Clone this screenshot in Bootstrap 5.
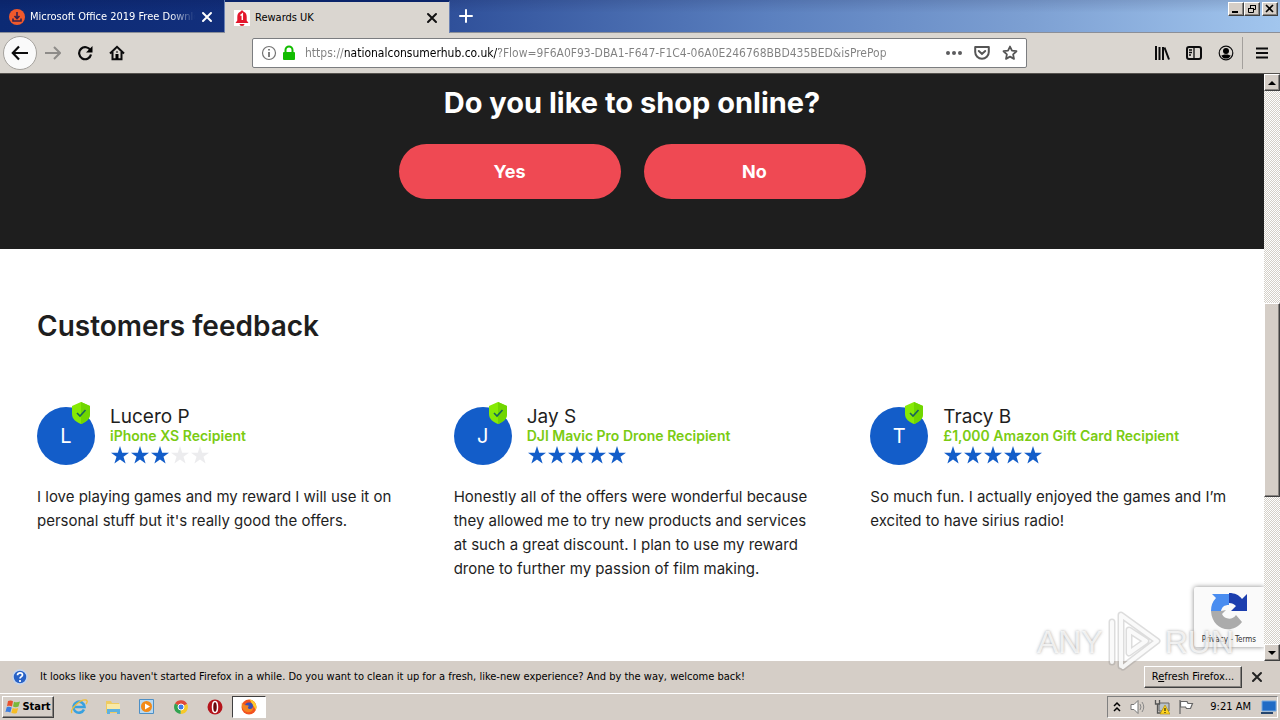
<!DOCTYPE html>
<html lang="en">
<head>
<meta charset="utf-8">
<meta name="viewport" content="width=device-width, initial-scale=1">
<title>Rewards UK</title>
<link href="https://cdn.jsdelivr.net/npm/bootstrap@5.3.0/dist/css/bootstrap.min.css" rel="stylesheet">
<style>
:root { --chrome: #dad6d0; --classic: #d5cec7; --brand: #135dc9; --ui: "DejaVu Sans Condensed", "DejaVu Sans", sans-serif; }
body { font-family: var(--ui); font-size: 11px; line-height: 16px; color: #000; background: var(--classic); }
button { padding: 0; border: 0; background: none; color: inherit; }
svg { display: block; flex: none; }
.tabstrip { height: 33px; background: linear-gradient(rgba(0,0,40,.12), transparent 40%), linear-gradient(90deg, #0c2a74 0, #122f7c 18%, #2f509a 35%, #5b80bf 60%, #7c9fd2 80%, #a2c6ee 100%); border-bottom: 1px solid #8b8f98; }
.browser-tab { width: 225px; color: #fff; padding: 2px 9px 0 8px; border-right: 1px solid #6b82b4; }
.browser-tab.current { background: var(--chrome); color: #000; border-top: 2px solid #0a246a; margin-bottom: -1px; padding-top: 0; }
.tab-title { -webkit-mask-image: linear-gradient(90deg, #000 85%, transparent); mask-image: linear-gradient(90deg, #000 85%, transparent); }
.bevel { background: var(--classic); border: 1px solid; border-color: #fff #404040 #404040 #fff; box-shadow: inset -1px -1px #888480; }
.win-controls { padding: 2px 2px 0 0; }
.win-btn { width: 16px; height: 14px; }
.win-btn + .win-btn + .win-btn { margin-left: 2px; }
.toolbar-row { height: 41px; background: var(--chrome); border-bottom: 1px solid #55524e; padding: 0 3px; }
.back { width: 34px; height: 34px; border-radius: 50%; background: #fafafa; border: 1px solid #a5a29d; }
.address { width: 775px; height: 30px; border: 1px solid #7b7d80; border-radius: 2px; background: #fff; }
.address input { border: 0; outline: 0; padding: 0; font-size: 12px; color: transparent; background: linear-gradient(90deg, #808080 0 40px, #000 40px 194px, #808080 194px calc(100% - 60px), transparent calc(100% - 20px)); -webkit-background-clip: text; background-clip: text; min-width: 0; }
.toolbar-row .vr { height: 32px; align-self: center; }
.page { font-family: Inter, "Open Sans", sans-serif; color: #1e1e1e; background: #fff; }
.question { background: #1e1e1e; color: #fff; padding: 12px 16px 50px; }
.question h1 { font-size: 29px; line-height: 34px; font-weight: 700; margin-bottom: 24px; }
.answers { gap: 23px; }
.answer { width: 222px; height: 55px; border-radius: 28px; background: #ef4953; font-size: 18px; font-weight: 700; color: #fff; }
.feedback { padding: 60px 37px; }
.feedback h2 { font-size: 28px; line-height: 34px; font-weight: 600; margin-bottom: 64px; }
.reviews { display: grid; grid-template-columns: repeat(3, minmax(0, 1fr)); column-gap: 60px; }
.reviewer { gap: 15px; }
.avatar { width: 58px; height: 58px; border-radius: 50%; background: var(--brand); color: #fff; font-size: 20px; }
.shield { position: absolute; top: -5px; right: 4px; }
.who h3 { font-size: 19px; line-height: 20px; font-weight: 400; margin: 0; }
.who p { font-size: 14px; line-height: 18px; font-weight: 600; color: #7acb12; margin: 0; }
.review-text { font-size: 15px; line-height: 24px; margin: 20px 0 0; white-space: nowrap; }
.track { width: 16px; background: repeating-conic-gradient(#d4d0c8 0 25%, #fff 0 50%) 0 0 / 2px 2px; }
.track .bevel { width: 16px; }
.track .arrow { height: 17px; }
.captcha { position: absolute; right: 0; bottom: 14px; width: 70px; height: 60px; background: #fafafa; box-shadow: 0 0 5px #888; font-size: 8px; line-height: 10px; border-radius: 2px 0 0 2px; font-family: "DejaVu Sans Condensed", sans-serif; padding: 4px 0 2px; }
.captcha a { color: #333; text-decoration: none; }
.brandmark { position: absolute; right: 46px; bottom: 46px; z-index: 3; pointer-events: none; font-family: "Liberation Sans Narrow", "Liberation Sans", sans-serif; font-size: 32px; line-height: 64px; color: rgba(255,255,255,.75); text-shadow: 0 0 3px rgba(90,90,90,.55); }
.notice { height: 33px; border-bottom: 1px solid #fff; background: var(--classic); }
.refresh { width: 98px; height: 22px; }
.taskbar { height: 26px; background: var(--classic); padding: 0 2px; }
.start { width: 52px; height: 22px; font-weight: 700; }
.launch { width: 34px; height: 22px; }
.launch.open { background: #fff; border: 1px solid; border-color: #404040 #fff #fff #404040; }
.tray { height: 22px; border: 1px solid; border-color: #808080 #fff #fff #808080; }
</style>
</head>
<body class="vh-100 d-flex flex-column overflow-hidden">
<header>
  <div class="tabstrip d-flex">
    <div class="browser-tab d-flex align-items-center gap-1">
      <svg width="18" height="18" viewBox="0 0 18 18"><circle cx="9" cy="9" r="8" fill="#f0592b"/><path d="M9 4v6M6.500 8L9 10.500 11.500 8M5 10.500v2.500h8v-2.500" fill="none" stroke="#38204a" stroke-width="1.600"/></svg>
      <span class="tab-title flex-grow-1 text-nowrap overflow-hidden">Microsoft Office 2019 Free Download</span>
      <button aria-label="Close tab"><svg width="16" height="16" viewBox="0 0 16 16"><path d="M4 4l8 8M12 4l-8 8" stroke="#fff" stroke-width="2" stroke-linecap="round"/></svg></button>
    </div>
    <div class="browser-tab current d-flex align-items-center gap-1">
      <svg width="18" height="18" viewBox="0 0 18 18"><path fill="#fff" d="M1 1h16v16H1z"/><path d="M9 1.500c-1 0-1.500.6-1.500 1.300C5 3.500 4.300 5.500 4.300 8v3.500L2.500 14h13l-1.800-2.500V8c0-2.500-.7-4.500-3.200-5.200 0-.7-.5-1.300-1.500-1.300zM6.500 15a2.500 2 0 0 0 5 0z" fill="#e3172c"/><path d="M7.500 6.500L9.300 5v6" fill="none" stroke="#fff" stroke-width="1.500"/></svg>
      <span class="flex-grow-1">Rewards UK</span>
      <button aria-label="Close tab"><svg width="16" height="16" viewBox="0 0 16 16"><path d="M4 4l8 8M12 4l-8 8" stroke="#111" stroke-width="2" stroke-linecap="round"/></svg></button>
    </div>
    <button class="px-2" aria-label="New tab"><svg width="16" height="16" viewBox="0 0 16 16"><path d="M8 2v12M2 8h12" stroke="#fff" stroke-width="2" stroke-linecap="round"/></svg></button>
    <div class="win-controls d-flex ms-auto align-self-start">
      <button class="bevel win-btn" aria-label="Minimise"><svg width="14" height="12"><path d="M3 8h6v2H3z"/></svg></button>
      <button class="bevel win-btn" aria-label="Restore"><svg width="14" height="12"><path d="M5.500 5V2.500h5v4H9M5 2.500h6M3.500 5.500h5v4h-5zM3 5.500h6" fill="none" stroke="#000"/></svg></button>
      <button class="bevel win-btn" aria-label="Close"><svg width="14" height="12"><path d="M3 2l7 7M10 2L3 9" stroke="#000" stroke-width="1.600"/></svg></button>
    </div>
  </div>
  <nav class="toolbar-row d-flex align-items-center" aria-label="Browser">
    <div class="d-flex align-items-center gap-2 flex-grow-1">
      <button class="back d-flex align-items-center justify-content-center" aria-label="Back"><svg width="18" height="18" viewBox="0 0 18 18"><path d="M17 9H2M8 2.500L1.800 9 8 15.500" fill="none" stroke="#0c0c0d" stroke-width="2.200"/></svg></button>
      <div class="d-flex align-items-center gap-3">
        <button aria-label="Forward"><svg width="16" height="16" viewBox="0 0 16 16"><path d="M0 8h15M9 2l6 6-6 6" fill="none" stroke="#8e8c89" stroke-width="2"/></svg></button>
        <button aria-label="Reload"><svg width="16" height="16" viewBox="0 0 16 16"><path d="M13.500 5.500A6 6 0 1 0 14 9.500" fill="none" stroke="#0c0c0d" stroke-width="2.200"/><path d="M15.500 1v6.500H9z"/></svg></button>
        <button aria-label="Home"><svg width="16" height="16" viewBox="0 0 16 16"><path d="M1 8.500L8 1.800l7 6.700M3.500 7v7.200h9V7" fill="none" stroke="#0c0c0d" stroke-width="2"/><path d="M6.500 9h3v5h-3z"/><path d="M7.500 6h1v2h-1z"/></svg></button>
      </div>
    </div>
    <div class="address d-flex align-items-center px-2 gap-1">
      <svg width="16" height="16" viewBox="0 0 16 16"><circle cx="8" cy="8" r="6.500" fill="none" stroke="#737373" stroke-width="1.200"/><path d="M7.200 4h1.600v1.600H7.200zM7.200 7h1.600v5H7.200z" fill="#606060"/></svg>
      <svg width="16" height="16" viewBox="0 0 16 16"><path d="M4.500 8V5a3.500 3.500 0 0 1 7 0v3" fill="none" stroke="#12bc00" stroke-width="2"/><rect x="2" y="7" width="12" height="8" rx="1" fill="#12bc00"/></svg>
      <input class="flex-grow-1 ms-1" type="text" aria-label="Address" value="https://nationalconsumerhub.co.uk/?Flow=9F6A0F93-DBA1-F647-F1C4-06A0E246768BBD435BED&amp;isPrePop">
      <div class="d-flex gap-2 align-items-center">
        <button class="pe-1" aria-label="Page actions"><svg width="16" height="16"><g fill="#5c5c5e"><circle cx="2" cy="8" r="2"/><circle cx="8" cy="8" r="2"/><circle cx="14" cy="8" r="2"/></g></svg></button>
        <button class="pe-1" aria-label="Save to Pocket"><svg width="16" height="16" viewBox="0 0 16 16"><path d="M1.200 2h13.600v5A6.800 6.800 0 0 1 1.200 7z" fill="none" stroke="#555" stroke-width="2" stroke-linejoin="round"/><path d="M4.800 6L8 9l3.200-3" fill="none" stroke="#555" stroke-width="2" stroke-linecap="round"/></svg></button>
        <button aria-label="Bookmark"><svg width="16" height="16" viewBox="0 0 18 18"><path d="M9 1.700l2.200 4.700 5.100.6-3.800 3.500 1 5.100L9 13.100l-4.500 2.500 1-5.100L1.700 7l5.100-.6z" fill="none" stroke="#555" stroke-width="2" stroke-linejoin="round"/></svg></button>
      </div>
    </div>
    <div class="d-flex align-items-center gap-2 flex-grow-1 justify-content-end pe-2">
      <div class="d-flex gap-3">
        <button aria-label="Library"><svg width="16" height="16" viewBox="0 0 16 16"><path d="M2 1v14M5.500 2v13M9 2v13M10.500 2.500l4.500 12" stroke="#0c0c0d" stroke-width="2"/></svg></button>
        <button aria-label="Sidebars"><svg width="16" height="16" viewBox="0 0 16 16"><rect x="1" y="2" width="14" height="12" rx="2" fill="none" stroke="#0c0c0d" stroke-width="2"/><path d="M8 2v12M3 5h3M3 7.500h3M3 10h2" stroke="#0c0c0d" stroke-width="1.300"/></svg></button>
        <button aria-label="Account"><svg width="16" height="16" viewBox="0 0 16 16"><circle cx="8" cy="8" r="6.800" fill="none" stroke="#0c0c0d" stroke-width="1.200"/><circle cx="8" cy="6" r="3"/><path d="M3.300 10.500c1.500 0 2-1 3-1h3.400c1 0 1.500 1 3 1C11.500 13 10 13.500 8 13.500s-3.500-.5-4.700-3z"/></svg></button>
      </div>
      <div class="vr"></div>
      <button class="ps-1" aria-label="Menu"><svg width="14" height="14" viewBox="0 0 14 14"><path d="M1 2.500h12M1 7h12M1 11.500h12" stroke="#0c0c0d" stroke-width="2"/></svg></button>
    </div>
  </nav>
</header>

<div class="d-flex flex-grow-1 overflow-hidden">
  <main class="page flex-grow-1 position-relative overflow-hidden">
    <section class="question text-center">
      <h1>Do you like to shop online?</h1>
      <div class="answers d-flex justify-content-center">
        <button class="answer">Yes</button>
        <button class="answer">No</button>
      </div>
    </section>
    <section class="feedback">
      <h2>Customers feedback</h2>
      <div class="reviews">
        <article>
          <div class="reviewer d-flex align-items-center">
            <div class="avatar position-relative d-flex align-items-center justify-content-center">L<svg class="shield" width="20" height="22" viewBox="0 0 20 22"><use href="#shield"/></svg></div>
            <div class="who"><h3>Lucero P</h3><p>iPhone XS Recipient</p><svg width="100" height="20" role="img" aria-label="3 of 5 stars"><g fill="#135dc9"><use href="#star"/><use href="#star" x="20"/><use href="#star" x="40"/></g><g fill="#ececee"><use href="#star" x="60"/><use href="#star" x="80"/></g></svg></div>
          </div>
          <p class="review-text">I love playing games and my reward I will use it on<br>personal stuff but it's really good the offers.</p>
        </article>
        <article>
          <div class="reviewer d-flex align-items-center">
            <div class="avatar position-relative d-flex align-items-center justify-content-center">J<svg class="shield" width="20" height="22" viewBox="0 0 20 22"><use href="#shield"/></svg></div>
            <div class="who"><h3>Jay S</h3><p>DJI Mavic Pro Drone Recipient</p><svg width="100" height="20" role="img" aria-label="5 of 5 stars" fill="#135dc9"><use href="#star"/><use href="#star" x="20"/><use href="#star" x="40"/><use href="#star" x="60"/><use href="#star" x="80"/></svg></div>
          </div>
          <p class="review-text">Honestly all of the offers were wonderful because<br>they allowed me to try new products and services<br>at such a great discount. I plan to use my reward<br>drone to further my passion of film making.</p>
        </article>
        <article>
          <div class="reviewer d-flex align-items-center">
            <div class="avatar position-relative d-flex align-items-center justify-content-center">T<svg class="shield" width="20" height="22" viewBox="0 0 20 22"><use href="#shield"/></svg></div>
            <div class="who"><h3>Tracy B</h3><p>£1,000 Amazon Gift Card Recipient</p><svg width="100" height="20" role="img" aria-label="5 of 5 stars" fill="#135dc9"><use href="#star"/><use href="#star" x="20"/><use href="#star" x="40"/><use href="#star" x="60"/><use href="#star" x="80"/></svg></div>
          </div>
          <p class="review-text">So much fun. I actually enjoyed the games and I’m<br>excited to have sirius radio!</p>
        </article>
      </div>
    </section>
    <aside class="captcha d-flex flex-column align-items-center justify-content-between">
      <svg width="40" height="40" viewBox="0 0 40 40"><path d="M2 20A18 18 0 0 1 7 7L3 3h17v11c-5 0-7 2-8 6z" fill="#4a8df0"/><path d="M20 2c6 0 10 2 13 6l5-5v17H22l5-5c-2-2-4-3-7-3z" fill="#1c3eae"/><path d="M2 20h10l5-1-4 4c2 5 10 7 14 1l6 7C23 44 3 39 2 20z" fill="#ababab"/></svg>
      <div><a href="#privacy">Privacy</a> - <a href="#terms">Terms</a></div>
    </aside>
  </main>
  <div class="track d-flex flex-column">
    <button class="bevel arrow d-flex align-items-center justify-content-center" aria-label="Scroll up"><svg width="8" height="4"><path d="M0 4l4-4 4 4z"/></svg></button>
    <div style="flex:214"></div><div class="bevel" style="flex:194"></div><div style="flex:148"></div>
    <button class="bevel arrow d-flex align-items-center justify-content-center" aria-label="Scroll down"><svg width="8" height="4"><path d="M0 0h8L4 4z"/></svg></button>
  </div>
</div>

<div class="brandmark d-flex align-items-center" aria-hidden="true">
  <span>ANY</span>
  <svg width="62" height="64" viewBox="0 0 62 64"><g fill="none" stroke-linejoin="round" stroke-linecap="round"><path d="M9 52V12M18 56V5l36 26-34 26M26 43V20l17 11z" stroke="#777" stroke-opacity=".25" stroke-width="7"/><path d="M9 52V12M18 56V5l36 26-34 26M26 43V20l17 11z" stroke="#fff" stroke-opacity=".85" stroke-width="4"/></g></svg>
  <span>RUN</span>
</div>

<div class="notice d-flex align-items-center ps-2 pe-3">
  <svg class="ms-1" width="16" height="16" viewBox="0 0 16 16"><circle cx="8" cy="8" r="7" fill="#2862c6" stroke="#c4d5ef" stroke-width="1.500"/><path d="M5.500 6.200C5.500 3 10.500 3.200 10.500 6 10.500 7.600 8 7.800 8 9.600M8 11v2" fill="none" stroke="#fff" stroke-width="1.700"/></svg>
  <span class="flex-grow-1 text-nowrap ps-2 ms-1">It looks like you haven't started Firefox in a while. Do you want to clean it up for a fresh, like-new experience? And by the way, welcome back!</span>
  <button class="refresh bevel me-2 text-nowrap">R<u>e</u>fresh Firefox...</button>
  <button aria-label="Dismiss"><svg width="14" height="14" viewBox="0 0 14 14"><path d="M3 3l8 8M11 3l-8 8" stroke="#222" stroke-width="2" stroke-linecap="round"/></svg></button>
</div>

<footer class="taskbar d-flex align-items-center">
  <button class="start bevel d-flex align-items-center justify-content-center me-2"><svg width="17" height="16" viewBox="0 0 17 16"><path d="M3 2c2-1 4-.5 5 .3L7 7.500C5.500 6.600 4 6.500 2 7.200z" fill="#e8502c"/><path d="M9 2.800c2 .8 4 .6 6-.2l-1.500 5c-2 .8-4 .7-5.500 0z" fill="#79b83a"/><path d="M1.700 8.300c2-.8 3.600-.5 5 .3l-1.400 5C4 12.700 2 12.600.4 13.200z" fill="#3b7de0"/><path d="M7.700 9c2 .8 3.600.7 5.500 0l-1.400 5c-2 .8-4 .6-5.500-.2z" fill="#f6bd25"/></svg>Start</button>
  <button class="launch d-flex align-items-center justify-content-center" aria-label="Internet Explorer"><svg width="18" height="18" viewBox="0 0 18 18"><path d="M14 11.500A5.500 5.500 0 1 1 14.500 9H5" fill="none" stroke="#38a1df" stroke-width="2.600"/><path d="M2 15C-1 12 10 1 16 2c2 .5 1 3 0 4" fill="none" stroke="#efbd37" stroke-width="1.300"/></svg></button>
  <button class="launch d-flex align-items-center justify-content-center" aria-label="Explorer"><svg width="18" height="18" viewBox="0 0 18 18"><path d="M2 3h5l1 2h7v10H2z" fill="#eecb62"/><path d="M3 6h13v5H3z" fill="#f8e9a6"/><path d="M3 11h13v5h-3v-2H6v2H3z" fill="#5fb1df"/></svg></button>
  <button class="launch d-flex align-items-center justify-content-center" aria-label="Media Player"><svg width="18" height="18" viewBox="0 0 18 18"><path d="M1.500 1.500h14v14h-14z" fill="#b8d9f2" stroke="#4d8fc5"/><circle cx="8.500" cy="8.500" r="5.500" fill="#f28a18"/><path d="M7 5.500v6l5-3z" fill="#fff"/></svg></button>
  <button class="launch d-flex align-items-center justify-content-center" aria-label="Chrome"><svg width="16" height="16" viewBox="0 0 16 16"><path d="M8 8L2 4.500A7 7 0 0 1 14.200 5z" fill="#e04a3a"/><path d="M8 8l6.200-3A7 7 0 0 1 7.500 15z" fill="#f7c928"/><path d="M8 8l-.5 7A7 7 0 0 1 2 4.500z" fill="#32a350"/><circle cx="8" cy="8" r="3" fill="#3e7ce8" stroke="#fff"/></svg></button>
  <button class="launch d-flex align-items-center justify-content-center" aria-label="Opera"><svg width="16" height="16" viewBox="0 0 16 16"><circle cx="8" cy="8" r="7.500" fill="#b5141b"/><ellipse cx="8" cy="8" rx="2.500" ry="5.500" fill="#6a080c" stroke="#fff" stroke-width="1.500"/></svg></button>
  <button class="launch open d-flex align-items-center justify-content-center" aria-label="Firefox"><svg width="18" height="18" viewBox="0 0 18 18"><circle cx="9" cy="9" r="7.500" fill="#f2521f"/><path d="M9 1.500a7.500 7.500 0 0 1 6.500 11C15 9 13 8 12 6 11 4 11 3 9 1.500z" fill="#ffcb2e"/><circle cx="9" cy="8.500" r="4" fill="#3a4fb5"/><path d="M2 4c0 2 2 2 3 3 1 .5 3 0 4 1-2 1-1 3 1 3 2 0 3-1 3-3 1 4-2 7-6 6C3 13 1 9 2 4z" fill="#f58220"/></svg></button>
  <div class="tray d-flex align-items-center ms-auto ps-1">
    <svg width="10" height="12" viewBox="0 0 10 12"><path d="M2 5l3-3 3 3M2 10l3-3 3 3" fill="none" stroke="#000" stroke-width="1.500"/></svg>
    <svg class="ms-2" width="16" height="16" viewBox="0 0 16 16"><path d="M1 5.500h3l4-4v13l-4-4H1z" fill="#fff" stroke="#777"/><path d="M10 5q2 3 0 6M12 3q3.500 5 0 10" fill="none" stroke="#888"/></svg>
    <svg class="ms-2" width="16" height="16" viewBox="0 0 16 16"><path d="M5 4h10v8H5z" fill="#b9c2c9" stroke="#666"/><path d="M1.500 1v4h4V1M3.500 5v9H8" fill="none" stroke="#555" stroke-width="1.300"/><path d="M11 6l5 9H6z" fill="#ffd41f" stroke="#a88500" stroke-width=".6"/><path d="M11 9v3M11 13v1" stroke="#000"/></svg>
    <svg class="ms-2" width="16" height="16" viewBox="0 0 16 16"><path d="M2 1v14M2.500 2.500H9l1 2h4.500l-2 5H8.500l-1-1.500h-5z" fill="#fff" stroke="#666" stroke-width="1.200"/></svg>
    <span class="ms-3 me-2">9:21 AM</span>
    <svg width="18" height="16" viewBox="0 0 18 16"><path d="M3 2h14v10H3z" fill="#206bc5" stroke="#74a9df"/><path d="M2 13h12v2H2z" fill="#26466e"/></svg>
  </div>
</footer>

<svg width="0" height="0" class="position-absolute" aria-hidden="true">
  <defs>
    <path id="star" d="M10 1l2.200 6.700H19l-5.500 4.100 2.100 6.700L10 14.400l-5.600 4.100 2.100-6.700L1 7.700h6.800z"/>
    <g id="shield"><path d="M10 0l9 4v8c0 5-4 8-9 10-5-2-9-5-9-10V4z" fill="#86ea05"/><path d="M10 0l9 4v8c0 5-4 8-9 10z" fill="#70d600"/><path d="M6 11l3 3 5.500-6" fill="none" stroke="#17635c" stroke-width="1.600"/></g>
  </defs>
</svg>
<script src="https://cdn.jsdelivr.net/npm/bootstrap@5.3.0/dist/js/bootstrap.bundle.min.js"></script>
</body>
</html>
